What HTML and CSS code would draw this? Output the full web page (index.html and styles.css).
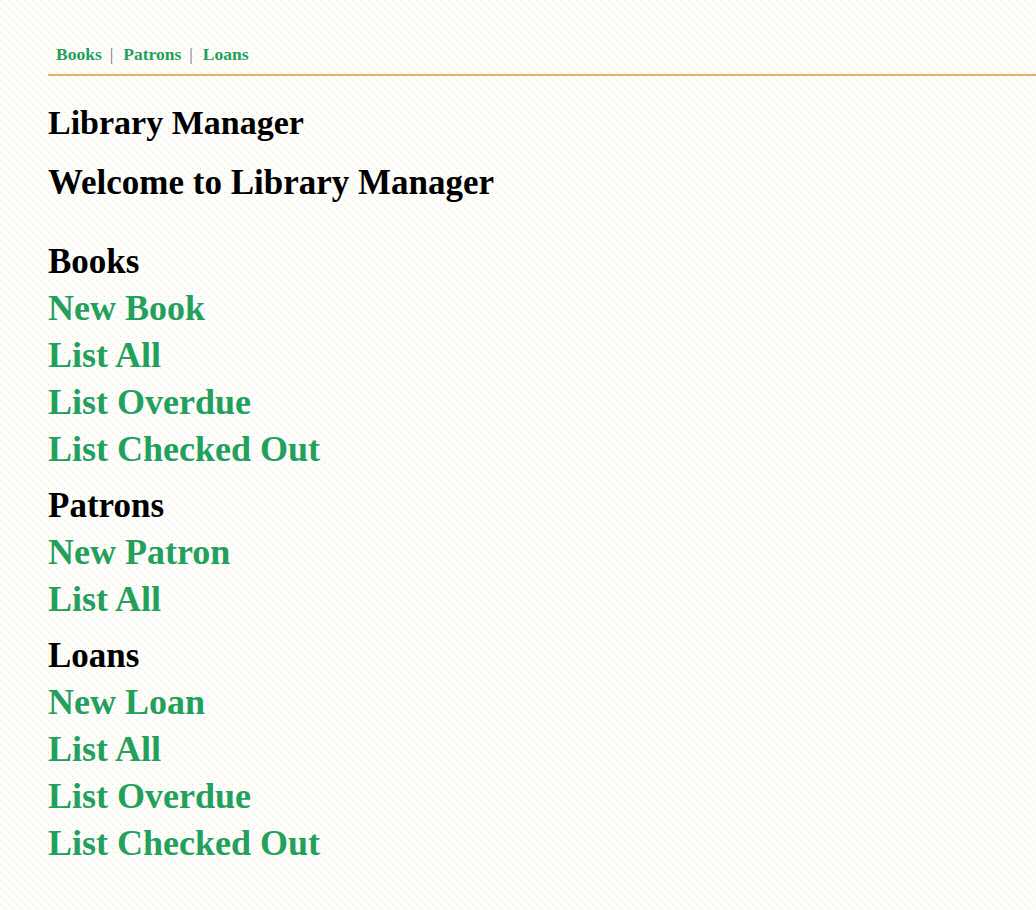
FILE: index.html
```html
<!DOCTYPE html>
<html lang="en">
<head>
<meta charset="utf-8">
<title>Library Manager</title>
<link rel="stylesheet" href="styles.css">
</head>
<body>
<div class="page">
  <nav class="topnav">
    <a href="#">Books</a><span class="sep">|</span><a href="#">Patrons</a><span class="sep">|</span><a href="#">Loans</a>
  </nav>
  <h1 class="title">Library Manager</h1>
  <h2 class="welcome">Welcome to Library Manager</h2>
  <section class="group">
    <h3 class="group-title">Books</h3>
    <a class="action" href="#">New Book</a>
    <a class="action" href="#">List All</a>
    <a class="action" href="#">List Overdue</a>
    <a class="action" href="#">List Checked Out</a>
  </section>
  <section class="group">
    <h3 class="group-title">Patrons</h3>
    <a class="action" href="#">New Patron</a>
    <a class="action" href="#">List All</a>
  </section>
  <section class="group">
    <h3 class="group-title">Loans</h3>
    <a class="action" href="#">New Loan</a>
    <a class="action" href="#">List All</a>
    <a class="action" href="#">List Overdue</a>
    <a class="action" href="#">List Checked Out</a>
  </section>
</div>
</body>
</html>
```

FILE: styles.css
```css
html, body {
  margin: 0;
  padding: 0;
}
body {
  background-color: #fcfcfd;
  background-image:
    radial-gradient(circle at 0.5px 0.5px, #f4ee7a 0.5px, transparent 0.6px),
    radial-gradient(circle at 0.5px 0.5px, #f4ee7a 0.5px, transparent 0.6px);
  background-size: 8px 8px, 8px 8px;
  background-position: 0 0, 4px 4px;
  font-family: "Liberation Serif", "Times New Roman", serif;
  color: #000;
  min-height: 910px;
}
.page {
  padding-left: 48px;
}
.topnav {
  display: flex;
  align-items: center;
  padding: 44px 0 10px 8px;
  line-height: 20px;
  font-size: 17.5px;
  font-weight: bold;
  border-bottom: 2px solid #dcb266;
}
.topnav a {
  color: #22a05c;
  text-decoration: none;
}
.topnav .sep {
  color: #70707c;
  font-weight: normal;
  margin: 0 10px 0 8px;
}
.title {
  margin: 27px 0 0;
  font-size: 34px;
  line-height: 40px;
  font-weight: bold;
}
.welcome {
  margin: 20px 0 0;
  font-size: 35px;
  line-height: 40px;
  font-weight: bold;
}
.group {
  display: flex;
  flex-direction: column;
  align-items: flex-start;
  margin-top: 9px;
}
.welcome + .group {
  margin-top: 35px;
}
.group-title {
  margin: 0;
  font-size: 35px;
  line-height: 47px;
  font-weight: bold;
}
.action {
  font-size: 36px;
  line-height: 47px;
  font-weight: bold;
  color: #22a05c;
  text-decoration: none;
}
```
